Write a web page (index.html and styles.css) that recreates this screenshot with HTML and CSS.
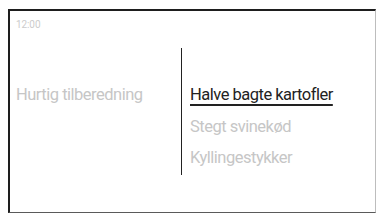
FILE: index.html
```html
<!DOCTYPE html>
<html lang="da">
<head>
  <meta charset="UTF-8">
  <meta name="viewport" content="width=device-width, initial-scale=1.0">
  <title>Hurtig tilberedning</title>
  <link rel="stylesheet" href="styles.css">
</head>
<body>
<div class="screen">
  <div class="clock">12:00</div>

  <div class="main">
    <div class="category">Hurtig tilberedning</div>
    <ul class="menu">
      <li class="menu-item active">Halve bagte kartofler</li>
      <li class="menu-item">Stegt svinekød</li>
      <li class="menu-item">Kyllingestykker</li>
    </ul>
  </div>
</div>
</body>
</html>
```

FILE: styles.css
```css
:root {
  --text-dark: #222222;
  --text-dim: #c6c6c6;
  --frame-dark: #1e1e1e;
}

* {
  box-sizing: border-box;
  margin: 0;
  padding: 0;
  font-family: Roboto, 'Liberation Sans', sans-serif;
}

body {
  background-color: #ffffff;
  width: 378px;
  height: 215px;
  overflow: hidden;
}

.screen {
  margin: 9px 2px 2px 8px;
  height: 204px;
  border-left: 2px solid var(--frame-dark);
  border-top: 2px solid var(--frame-dark);
  border-right: 1px solid #bdbdbd;
  border-bottom: 1px solid #5a5a5a;
  padding: 7px 0 0 6px;
}

.clock {
  font-size: 10px;
  line-height: 13px;
  color: #cccccc;
  letter-spacing: -0.1px;
}

.main {
  display: flex;
  margin-top: 17px;
}

.category {
  width: 165px;
  padding-top: 31px;
  font-size: 16.5px;
  line-height: 31.5px;
  letter-spacing: -0.5px;
  color: var(--text-dim);
}

.menu {
  list-style: none;
  border-left: 1px solid var(--text-dark);
  padding: 31px 0 1px 8px;
}

.menu-item {
  font-size: 16.5px;
  line-height: 31.5px;
  letter-spacing: -0.5px;
  color: var(--text-dim);
}

.menu-item.active {
  color: var(--text-dark);
  text-decoration: underline;
  text-decoration-thickness: 1.5px;
  text-underline-offset: 4px;
}
```
